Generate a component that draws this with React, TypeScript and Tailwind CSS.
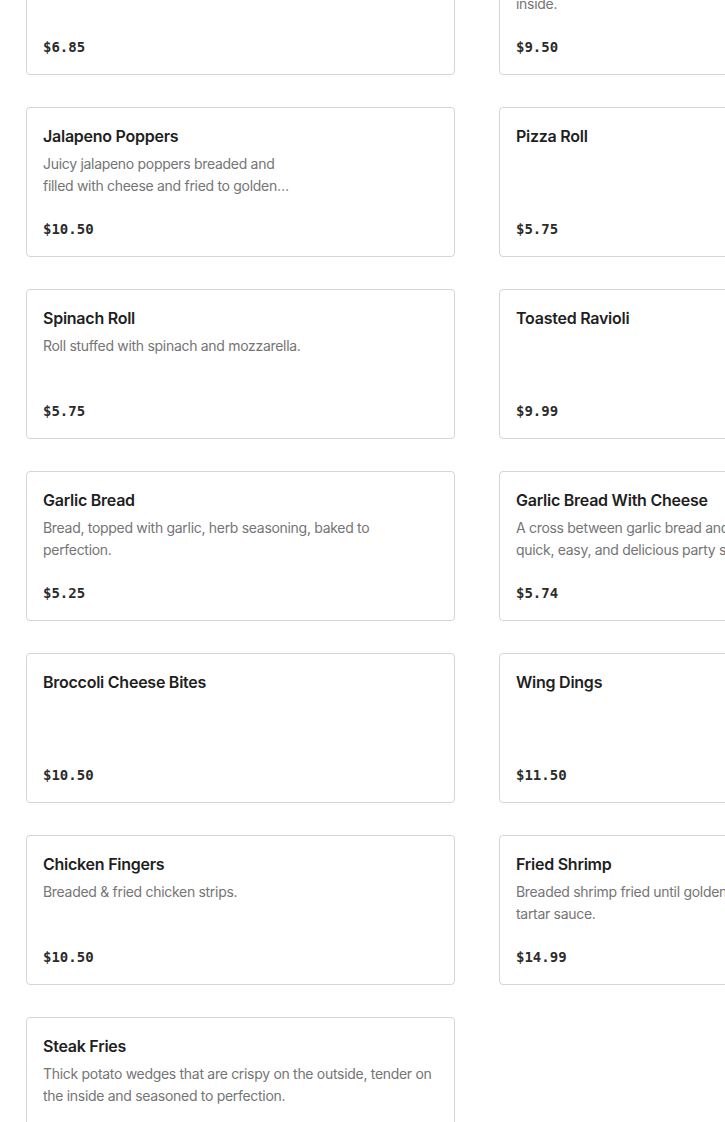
import React from 'react';

type Item = { name: string; desc?: string; price: string; narrow?: boolean };

const items: Item[] = [
  { name: 'Mozzarella Sticks', desc: 'Breaded mozzarella sticks served with marinara.', price: '$6.85' },
  { name: 'Stuffed Mushrooms', desc: 'Mushroom caps stuffed with cheese, golden outside, gooey inside.', price: '$9.50' },
  { name: 'Jalapeno Poppers', desc: 'Juicy jalapeno poppers breaded and filled with cheese and fried to golden brown.', price: '$10.50', narrow: true },
  { name: 'Pizza Roll', price: '$5.75' },
  { name: 'Spinach Roll', desc: 'Roll stuffed with spinach and mozzarella.', price: '$5.75' },
  { name: 'Toasted Ravioli', price: '$9.99' },
  { name: 'Garlic Bread', desc: 'Bread, topped with garlic, herb seasoning, baked to perfection.', price: '$5.25' },
  { name: 'Garlic Bread With Cheese', desc: 'A cross between garlic bread and cheesy bread, this is a quick, easy, and delicious party snack.', price: '$5.74' },
  { name: 'Broccoli Cheese Bites', price: '$10.50' },
  { name: 'Wing Dings', price: '$11.50' },
  { name: 'Chicken Fingers', desc: 'Breaded & fried chicken strips.', price: '$10.50' },
  { name: 'Fried Shrimp', desc: 'Breaded shrimp fried until golden brown, served with lemon, tartar sauce.', price: '$14.99' },
  { name: 'Steak Fries', desc: 'Thick potato wedges that are crispy on the outside, tender on the inside and seasoned to perfection.', price: '$4.99' },
];

function MenuCard({ item }: { item: Item }) {
  return (
    <div className="h-[150px] flex flex-col rounded-[4px] border border-[#d6d6d6] bg-white px-4 pt-4 pb-4">
      <h3 className="text-[16px] leading-6 font-semibold text-[#1f1f1f] tracking-[-0.25px]">{item.name}</h3>
      {item.desc && (
        <p className={`mt-[5px] text-[14px] leading-[22px] text-[#757575] tracking-[-0.3px] line-clamp-2 ${item.narrow ? 'w-[252px]' : ''}`}>{item.desc}</p>
      )}
      <div className="mt-auto text-[14px] leading-[22px] font-bold text-[#2b2b2b]" style={{ fontFamily: '"DejaVu Sans Mono", monospace' }}>{item.price}</div>
    </div>
  );
}

export default function App() {
  return (
    <div className="w-full h-[1122px] overflow-hidden bg-white" style={{ fontFamily: 'Inter, "Noto Sans", sans-serif' }}>
      <div className="-mt-[75px] pl-[26px] w-[950px] grid grid-cols-[429px_429px] gap-x-[44px] gap-y-[32px]">
        {items.map((it) => <MenuCard key={it.name} item={it} />)}
      </div>
    </div>
  );
}
